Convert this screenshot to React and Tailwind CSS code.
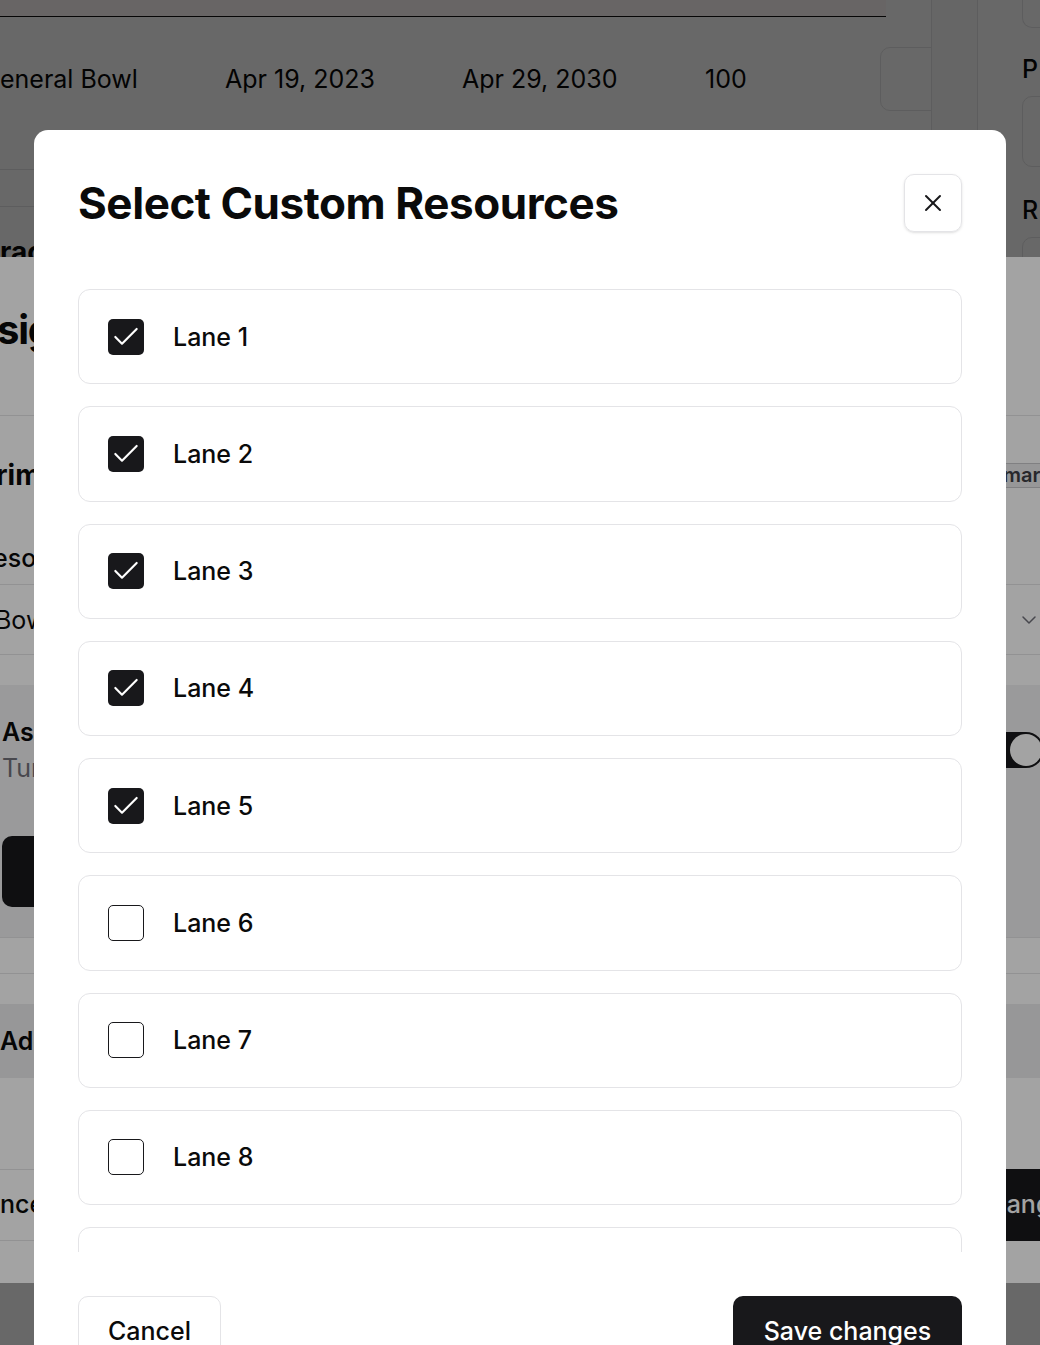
import React from "react";

function Check({ className = "" }) {
  return (
    <svg viewBox="0 0 24 24" fill="none" stroke="currentColor" strokeWidth="1.6" strokeLinecap="round" strokeLinejoin="round" className={className}>
      <path d="M20 6 9 17l-5-5" />
    </svg>
  );
}

function XIcon({ className = "" }) {
  return (
    <svg viewBox="0 0 24 24" fill="none" stroke="currentColor" strokeWidth="1.7" strokeLinecap="round" strokeLinejoin="round" className={className}>
      <path d="M18 6 6 18" />
      <path d="m6 6 12 12" />
    </svg>
  );
}

function Chevron({ className = "" }) {
  return (
    <svg viewBox="0 0 24 24" fill="none" stroke="currentColor" strokeWidth="1.5" strokeLinecap="round" strokeLinejoin="round" className={className}>
      <path d="m6 9 6 6 6-6" />
    </svg>
  );
}

function Page() {
  return (
    <div className="flex w-[1040px] h-[1345px]">
      <div className="w-[931px] shrink-0 flex flex-col">
        <div className="h-[17px] w-[886px] bg-[#fff9f7] border-b border-[#111111]" />
        <div className="h-[153px] border-b border-[#e4e4e7] flex items-start">
          <div className="h-[124px] flex items-center text-[25px] leading-[32px]">
            <span className="w-[225px]">eneral Bowl</span>
            <span className="w-[237px]">Apr 19, 2023</span>
            <span className="w-[243px]">Apr 29, 2030</span>
            <span className="w-[175px]">100</span>
            <div className="w-[60px] h-[64px] border border-[#e4e4e7] rounded-l-[10px]" />
          </div>
        </div>
        <div className="h-[37px] border-b border-[#e4e4e7]" />
        <div className="mt-[29px] text-[28px] leading-[32px] font-bold">racks</div>
      </div>
      <div className="w-[47px] shrink-0 bg-[#fbfbfb] border-x border-[#e4e4e7]" />
      <div className="flex-1 flex flex-col pl-[44px]">
        <div className="h-[28px] border border-t-0 border-[#e4e4e7] rounded-b-[10px] w-[60px]" />
        <div className="mt-[25px] text-[25px] leading-[32px] font-medium">P</div>
        <div className="mt-[11px] h-[71px] w-[60px] border border-[#e4e4e7] rounded-[10px]" />
        <div className="mt-[27px] text-[25px] leading-[32px] font-medium">R</div>
        <div className="mt-[11px] h-[71px] w-[60px] border border-[#e4e4e7] rounded-[10px]" />
      </div>
    </div>
  );
}

function MiddleDialog() {
  return (
    <div className="absolute left-0 top-[257px] w-[1100px] h-[1026px] bg-white flex flex-col pr-[40px]">
      <div className="h-[159px] border-b border-[#e4e4e7] pt-[51px] shrink-0">
        <h2 className="text-[40px] leading-[44px] font-bold tracking-[-0.03em] -ml-[3px]">sign</h2>
      </div>
      <div className="mt-[43px] h-[32px] flex items-center shrink-0">
        <span className="w-[1004px] shrink-0 text-[28px] leading-[32px] font-bold -ml-[4px]">rimary</span>
        <span className="h-[25px] shrink-0 px-[2px] flex items-center border border-[#c8c8cc] bg-[#ececee] rounded-[6px] text-[20px] font-semibold text-[#3f3f46]">mary</span>
      </div>
      <div className="mt-[51px] text-[25px] leading-[32px] font-medium -ml-[7px] shrink-0">esources</div>
      <div className="mt-[10px] h-[71px] border-y border-r border-[#e4e4e7] rounded-r-[10px] flex items-center justify-between pr-[18px] shrink-0">
        <span className="text-[25px] leading-[32px] -ml-[5px]">Bowl</span>
        <Chevron className="w-[24px] h-[24px] text-[#71717a]" />
      </div>
      <div className="mt-[30px] h-[253px] bg-[#f1f1f2] border-b border-[#e4e4e7] pt-[31px] px-[2px] flex flex-col shrink-0">
        <div className="flex items-center">
          <div className="w-[984px] shrink-0 flex flex-col">
            <span className="text-[25px] leading-[32px] font-semibold">Assign</span>
            <span className="mt-[4px] text-[25px] leading-[32px] text-[#71717a]">Turn</span>
          </div>
          <div className="w-[58px] shrink-0 h-[36px] rounded-full bg-[#18181b] flex items-center justify-end pr-[2px]">
            <div className="w-[32px] h-[32px] rounded-full bg-white" />
          </div>
        </div>
        <div className="mt-[52px] h-[71px] w-[200px] bg-[#18181b] rounded-[10px]" />
      </div>
      <div className="mt-[35px] border-t border-[#e4e4e7] shrink-0" />
      <div className="mt-[30px] h-[74px] bg-[#ececee] flex items-center shrink-0">
        <span className="text-[25px] leading-[32px] font-semibold">Add</span>
      </div>
      <div className="mt-[91px] h-[72px] flex shrink-0">
        <div className="w-[120px] shrink-0 h-[72px] border-y border-r border-[#e4e4e7] rounded-r-[10px] flex items-center text-[25px] font-medium">
          nce
        </div>
        <div className="ml-[774px] shrink-0 w-[230px] h-[72px] bg-[#18181b] rounded-[10px] flex items-center pl-[18px] text-[25px] font-medium text-white whitespace-nowrap">
          Save changes
        </div>
      </div>
    </div>
  );
}

function Item({ n, checked }) {
  return (
    <div className="h-[95.25px] shrink-0 border border-[#e4e4e7] rounded-[12px] flex items-center px-[29px] gap-[29px]">
      {checked ? (
        <div className="w-[36px] h-[36px] rounded-[5px] bg-[#18181b] flex items-center justify-center text-white">
          <Check className="w-[32px] h-[32px]" />
        </div>
      ) : (
        <div className="w-[36px] h-[36px] rounded-[5px] border-[1.5px] border-[#18181b] bg-white" />
      )}
      <span className="text-[25px] leading-[32px] font-medium text-[#0a0a0a]">Lane {n}</span>
    </div>
  );
}

function TopDialog() {
  const lanes = [1, 2, 3, 4, 5, 6, 7, 8, 9];
  return (
    <div className="absolute left-[34px] top-[130px] w-[972px] h-[1300px] bg-white rounded-t-[14px] px-[44px] pt-[44px] flex flex-col">
      <div className="flex items-center justify-between h-[58px] shrink-0">
        <h2 className="text-[44px] leading-[58px] font-bold tracking-[-0.01em] text-[#0a0a0a]">Select Custom Resources</h2>
        <button className="w-[58px] h-[58px] border border-[#e4e4e7] rounded-[10px] shadow-sm flex items-center justify-center text-[#18181b]">
          <XIcon className="w-[28px] h-[28px]" />
        </button>
      </div>
      <div className="mt-[57px] h-[963px] overflow-hidden flex flex-col gap-[22px] shrink-0">
        {lanes.map((n) => (
          <Item key={n} n={n} checked={n <= 5} />
        ))}
      </div>
      <div className="mt-[44px] flex justify-between shrink-0">
        <button className="h-[72px] w-[143px] border border-[#e4e4e7] rounded-[10px] text-[25px] font-medium text-[#0a0a0a] flex items-center justify-center">
          Cancel
        </button>
        <button className="h-[72px] w-[229px] bg-[#18181b] rounded-[10px] text-[25px] font-medium text-white flex items-center justify-center">
          Save changes
        </button>
      </div>
    </div>
  );
}

export default function App() {
  return (
    <div className="relative w-[1040px] h-[1345px] overflow-hidden bg-white font-['Inter',sans-serif] text-[#0a0a0a]">
      <Page />
      <div className="absolute inset-0 bg-black/[0.36]" />
      <MiddleDialog />
      <div className="absolute inset-0 bg-black/[0.36]" />
      <TopDialog />
    </div>
  );
}
